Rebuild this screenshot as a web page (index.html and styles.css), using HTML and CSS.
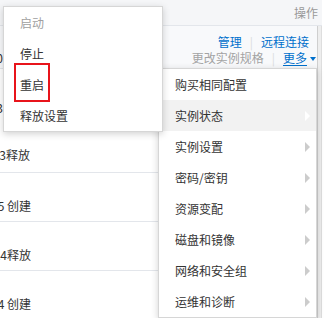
FILE: index.html
```html
<!DOCTYPE html>
<html lang="zh-CN">
<head>
<meta charset="utf-8">
<title>实例操作</title>
<link rel="stylesheet" href="styles.css">
</head>
<body>
<div class="page">
  <div class="table">
    <div class="thead"><span class="th-op">操作</span></div>
    <div class="tbody">
      <div class="rows">
        <div class="row row-1 row-hover">
          <div class="cell-left"><span>2019-11-20</span></div>
          <div class="actions">
            <div class="act-line act-line-1">
              <a class="link">管理</a><span class="sep">|</span><a class="link">远程连接</a>
            </div>
            <div class="act-line">
              <span class="link-disabled">更改实例规格</span><span class="sep">|</span><a class="link link-more">更多</a><span class="caret"></span>
            </div>
          </div>
        </div>
        <div class="row row-2">
          <div class="cell-left cell-a"><span>2019-11-23</span></div>
          <div class="cell-left cell-b"><span>2019-11-23释放</span></div>
        </div>
        <div class="row row-n">
          <div class="cell-left"><span>2019-11-20 10:25 创建</span></div>
        </div>
        <div class="row row-n">
          <div class="cell-left"><span>2019-11-24释放</span></div>
        </div>
        <div class="row row-n row-last">
          <div class="cell-left"><span>2019-11-21 09:14 创建</span></div>
        </div>
      </div>
      <div class="strip"></div>
    </div>
  </div>

  <ul class="menu menu-sub">
    <li class="item is-disabled">启动</li>
    <li class="item">停止</li>
    <li class="item item-marked">重启<span class="mark"></span></li>
    <li class="item">释放设置</li>
  </ul>

  <ul class="menu menu-main">
    <li class="item">购买相同配置</li>
    <li class="item has-sub is-active">实例状态<span class="arrow"></span></li>
    <li class="item has-sub">实例设置<span class="arrow"></span></li>
    <li class="item has-sub">密码/密钥<span class="arrow"></span></li>
    <li class="item has-sub">资源变配<span class="arrow"></span></li>
    <li class="item has-sub">磁盘和镜像<span class="arrow"></span></li>
    <li class="item has-sub">网络和安全组<span class="arrow"></span></li>
    <li class="item has-sub">运维和诊断<span class="arrow"></span></li>
  </ul>
</div>
</body>
</html>
```

FILE: styles.css
```css
* {
  box-sizing: border-box;
}

html,
body {
  margin: 0;
  padding: 0;
  background: #ffffff;
}

body {
  font-family: "Noto Sans CJK SC", "Noto Sans", "Liberation Sans", sans-serif;
  font-size: 12px;
  color: #333333;
  width: 335px;
  height: 318px;
  overflow: hidden;
}

.page {
  position: relative;
  width: 335px;
  height: 318px;
  overflow: hidden;
}

.table {
  width: 322px;
  display: flex;
  flex-direction: column;
}

.thead {
  height: 26px;
  background: #f5f6f8;
  border-bottom: 1px solid #e3e6eb;
  display: flex;
  justify-content: flex-end;
  align-items: center;
  padding-right: 4px;
}

.th-op {
  color: #999999;
  line-height: 16px;
  padding-top: 1px;
}

.tbody {
  display: flex;
}

.rows {
  width: 317px;
  display: flex;
  flex-direction: column;
}

.strip {
  width: 5px;
  background: #eeeeee;
  border-left: 1px solid #cfcfcf;
  border-right: 1px solid #dedede;
}

.row {
  display: flex;
  justify-content: space-between;
  align-items: flex-start;
  border-bottom: 1px solid #e3e6eb;
  background: #ffffff;
}

.row-hover {
  background: #f8f9fb;
}

.row-1 {
  height: 43px;
}

.row-2 {
  height: 104px;
  flex-direction: column;
  justify-content: flex-start;
}

.row-n {
  height: 49px;
}

.row-last {
  border-bottom: none;
}

.cell-left {
  width: 31px;
  overflow: hidden;
  display: flex;
  justify-content: flex-end;
  white-space: nowrap;
  line-height: 16px;
  color: #333333;
}

.row-1 .cell-left {
  width: 3px;
  margin-top: 24px;
}

.row-2 .cell-a {
  width: 3px;
  margin-top: 31px;
}

.row-2 .cell-b {
  width: 30px;
  margin-top: 31px;
}

.row-n .cell-left {
  margin-top: 25px;
}

.cell-left span {
  flex-shrink: 0;
}

.actions {
  display: flex;
  flex-direction: column;
  align-items: flex-end;
  padding-top: 8px;
  padding-right: 1px;
}

.act-line {
  display: flex;
  align-items: center;
  line-height: 16px;
  height: 16px;
}

.act-line-1 {
  padding-right: 7px;
}

.link {
  color: #0070cc;
  text-decoration: none;
}

.link-more {
  text-decoration: underline;
  text-underline-offset: 2px;
}

.link-disabled {
  color: #a3a3a3;
}

.sep {
  color: #dcdcdc;
  margin: 0 8px;
}

.caret {
  width: 0;
  height: 0;
  margin-left: 3px;
  margin-top: 2px;
  border-top: 4px solid #0070cc;
  border-left: 3.5px solid transparent;
  border-right: 3.5px solid transparent;
}

/* dropdown menus */
.menu {
  position: absolute;
  margin: 0;
  padding: 0;
  list-style: none;
  background: #ffffff;
  border: 1px solid #d6d6d6;
  box-shadow: 0 2px 7px rgba(0, 0, 0, 0.18);
}

.menu-main {
  left: 158px;
  top: 68px;
  width: 159px;
  z-index: 1;
}

.menu-sub {
  left: 3px;
  top: 6px;
  width: 160px;
  z-index: 2;
}

.item {
  position: relative;
  height: 31px;
  line-height: 31px;
  padding: 0 6px 0 16px;
  color: #333333;
  display: flex;
  align-items: center;
  justify-content: space-between;
  white-space: nowrap;
}

.is-disabled {
  color: #a0a0a0;
}

.is-active {
  background: #f2f2f2;
}

.arrow {
  width: 0;
  height: 0;
  border-left: 5px solid #cccccc;
  border-top: 5px solid transparent;
  border-bottom: 5px solid transparent;
}

.is-active .arrow {
  border-left-color: #ffffff;
}

.mark {
  position: absolute;
  left: 10px;
  top: -6px;
  width: 36px;
  height: 39px;
  border: 2px solid #e8141b;
  pointer-events: none;
}
```
